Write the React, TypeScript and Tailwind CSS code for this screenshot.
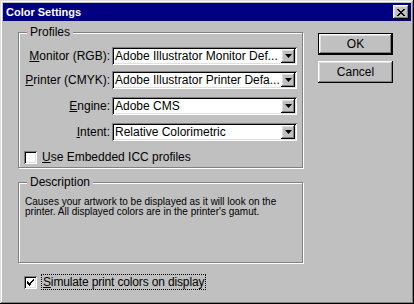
import React from 'react';

// Win98-style bevels
const raised =
  'shadow-[inset_-1px_-1px_#000,inset_1px_1px_#fff,inset_-2px_-2px_#808080,inset_2px_2px_#dfdfdf]';
const sunken =
  'shadow-[inset_1px_1px_#808080,inset_-1px_-1px_#fff,inset_2px_2px_#000,inset_-2px_-2px_#dfdfdf]';
const etched = 'border border-[#808080] shadow-[inset_1px_1px_#fff,1px_1px_#fff]';

const U = ({ children }: { children: React.ReactNode }) => (
  <span className="underline underline-offset-[1px]">{children}</span>
);

const Combo = ({ value }: { value: string }) => (
  <div className={`flex h-[18px] w-[185px] items-center bg-white p-[2px] ${sunken}`}>
    <span className="flex-1 truncate pl-[1px] leading-[14px]">{value}</span>
    <div className={`flex h-[14px] w-[14px] items-center justify-center bg-[#c0c0c0] ${raised}`}>
      <svg width="7" height="4" viewBox="0 0 7 4">
        <path d="M0 0h7L3.5 4z" fill="#000" />
      </svg>
    </div>
  </div>
);

const Checkbox = ({ checked }: { checked?: boolean }) => (
  <div className={`flex h-[13px] w-[13px] shrink-0 items-center justify-center bg-white ${sunken}`}>
    {checked && (
      <svg width="7" height="7" viewBox="0 0 7 7" shapeRendering="crispEdges">
        <path
          d="M0 2h1v1H0zM0 3h2v1H0zM0 4h3v1H0zM1 5h3v1H1zM2 6h1v1H2zM3 4h1v1H3zM4 3h1v1H4zM5 2h1v1H5zM6 0h1v1H6zM5 1h2v1H5zM4 2h2v1H4zM3 3h2v1H3z"
          fill="#000"
        />
      </svg>
    )}
  </div>
);

const Row = ({
  label,
  value,
  className = '',
}: {
  label: React.ReactNode;
  value: string;
  className?: string;
}) => (
  <div className={`flex items-center ${className}`}>
    <label className="w-[93px] pr-[2px] text-right">{label}</label>
    <Combo value={value} />
  </div>
);

export default function App() {
  return (
    <div
      className={`h-[304px] w-[414px] bg-[#c0c0c0] p-[3px] text-[12px] text-black font-['Liberation_Sans',Arial,sans-serif] shadow-[inset_-1px_-1px_#000,inset_1px_1px_#dfdfdf,inset_-2px_-2px_#808080,inset_2px_2px_#fff]`}
    >
      {/* Title bar */}
      <div className="flex h-[18px] items-center bg-[#000080] pl-[3px] pr-[2px]">
        <span className="flex-1 text-[11px] font-bold text-white">Color Settings</span>
        <div className={`flex h-[14px] w-[16px] items-center justify-center bg-[#c0c0c0] ${raised}`}>
          <svg width="8" height="7" viewBox="0 0 8 7" shapeRendering="crispEdges">
            <path
              d="M0 0h2v1H0zM6 0h2v1H6zM1 1h2v1H1zM5 1h2v1H5zM2 2h4v1H2zM3 3h2v1H3zM2 4h4v1H2zM1 5h2v1H1zM5 5h2v1H5zM0 6h2v1H0zM6 6h2v1H6z"
              fill="#000"
            />
          </svg>
        </div>
      </div>

      <div className="flex pl-[15px] pt-[11px]">
        {/* Left column */}
        <div className="w-[285px]">
          <div className={`relative h-[136px] ${etched}`}>
            <span className="absolute -top-[8px] left-[8px] bg-[#c0c0c0] px-[3px] leading-[14px]">
              Profiles
            </span>
            <Row className="mt-[14px]" label={<><U>M</U>onitor (RGB):</>} value="Adobe Illustrator Monitor Def..." />
            <Row className="mt-[6px]" label={<><U>P</U>rinter (CMYK):</>} value="Adobe Illustrator Printer Defa..." />
            <Row className="mt-[8px]" label={<><U>E</U>ngine:</>} value="Adobe CMS" />
            <Row className="mt-[8px]" label={<><U>I</U>ntent:</>} value="Relative Colorimetric" />
            <div className="mt-[10px] flex items-center gap-[5px] pl-[5px]">
              <Checkbox />
              <span className="leading-[13px]">
                <U>U</U>se Embedded ICC profiles
              </span>
            </div>
          </div>

          <div className={`relative mt-[14px] h-[81px] ${etched}`}>
            <span className="absolute -top-[8px] left-[8px] bg-[#c0c0c0] px-[3px] leading-[14px]">
              Description
            </span>
            <p className="pl-[6px] pt-[14px] text-[10px] leading-[10px]">
              Causes your artwork to be displayed as it will look on the
              <br />
              printer. All displayed colors are in the printer&apos;s gamut.
            </p>
          </div>

          <div className="mt-[11px] flex items-center gap-[4px] pl-[6px]">
            <Checkbox checked />
            <span className="border border-dotted border-black px-[1px] leading-[14px] tracking-[-0.15px]">
              <U>S</U>imulate print colors on display
            </span>
          </div>
        </div>

        {/* Right column */}
        <div className="ml-[15px] mt-[1px] flex flex-col gap-[6px]">
          <button className="h-[22px] w-[75px] border border-black bg-[#c0c0c0]">
            <div className={`flex h-full w-full items-center justify-center ${raised}`}>OK</div>
          </button>
          <button className={`h-[22px] w-[75px] bg-[#c0c0c0] ${raised}`}>Cancel</button>
        </div>
      </div>
    </div>
  );
}
